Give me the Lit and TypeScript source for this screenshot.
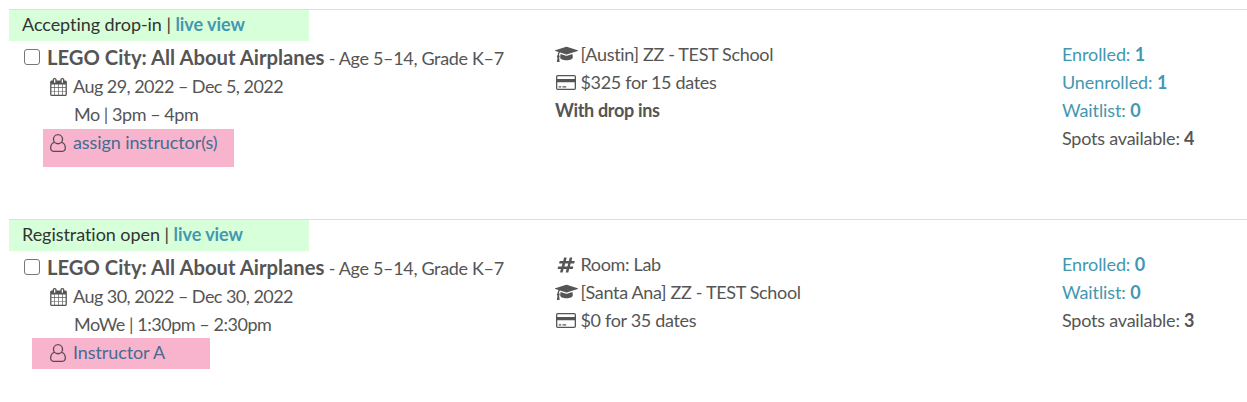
import { LitElement, html, css, svg } from "lit";
import { customElement, property } from "lit/decorators.js";
import { classMap } from "lit/directives/class-map.js";

const icons: Record<string, { box: string; w: number; path: string }> = {
  calendar: {
    box: "64 0 1664 1792", w: 17,
    path: "M192 1664h288v-288h-288v288zm352 0h320v-288h-320v288zm-352-352h288v-320h-288v320zm352 0h320v-320h-320v320zm-352-384h288v-288h-288v288zm736 736h320v-288h-320v288zm-384-736h320v-288h-320v288zm768 736h288v-288h-288v288zm-384-352h320v-320h-320v320zm-352-864v-288q0-13-9.5-22.5t-22.5-9.5h-64q-13 0-22.5 9.5t-9.5 22.5v288q0 13 9.5 22.5t22.5 9.5h64q13 0 22.5-9.5t9.5-22.5zm736 864h288v-320h-288v320zm-384-384h320v-288h-320v288zm384 0h288v-288h-288v288zm32-480v-288q0-13-9.5-22.5t-22.5-9.5h-64q-13 0-22.5 9.5t-9.5 22.5v288q0 13 9.5 22.5t22.5 9.5h64q13 0 22.5-9.5t9.5-22.5zm384-64v1280q0 52-38 90t-90 38h-1408q-52 0-90-38t-38-90v-1280q0-52 38-90t90-38h128v-96q0-66 47-113t113-47h64q66 0 113 47t47 113v96h384v-96q0-66 47-113t113-47h64q66 0 113 47t47 113v96h128q52 0 90 38t38 90z",
  },
  user: {
    box: "0 0 16 18", w: 16,
    path: "M8 0a5.1 5.1 0 0 1 4.3 7.9C14.6 8.7 16 11 16 14.1 16 16.4 14.6 18 12.6 18H3.400C1.400 18 0 16.400 0 14.100 0 11 1.400 8.700 3.700 7.900A5.100 5.100 0 0 1 8 0ZM8 1.300A3.850 3.850 0 1 0 8 9 3.850 3.850 0 0 0 8 1.300ZM4.500 9C2.400 9.200 1.300 11.300 1.300 14.100 1.300 15.700 2.200 16.700 3.400 16.700H12.600C13.800 16.700 14.700 15.700 14.700 14.100 14.700 11.300 13.600 9.200 11.500 9A5.100 5.100 0 0 1 4.500 9Z",
  },
  school: {
    box: "0 0.5 23 18", w: 23,
    path: "M17.500 8.500 17.800 12.100C17.900 13.500 15 14.800 11.500 14.800S5.100 13.500 5.200 12.100L5.500 8.500 11 10.200Q11.500 10.400 12 10.200ZM23 5.200Q23 5.500 22.700 5.600L11.700 9.100H11.400L5 7Q4.100 7.700 4 9.700 4.700 10.100 4.700 10.900 4.700 11.700 4.100 12.100L4.600 16Q4.600 16.500 4.200 16.500H2.300Q1.900 16.500 1.900 16L2.500 12.100Q1.900 11.700 1.900 10.900 1.900 10.100 2.600 9.700 2.700 7.800 3.600 6.600L.3 5.600Q0 5.500 0 5.200T.3 4.800L11.300 1.300H11.700L22.700 4.800Q23 4.900 23 5.200Z",
  },
  card: {
    box: "0 0.5 20 18", w: 20,
    path: "M1.800 1.500H18.200Q20 1.500 20 3.300V14.800Q20 16.500 18.200 16.500H1.800Q0 16.500 0 14.800V3.300Q0 1.500 1.800 1.500ZM1.700 2.700Q1.300 2.700 1.300 3.200V5.500H18.700V3.200Q18.700 2.700 18.300 2.700ZM18.300 15.300Q18.700 15.300 18.700 14.800V8.800H1.300V14.800Q1.300 15.300 1.700 15.300ZM2.700 14V12.700H5.200V14ZM6.500 14V12.700H10.200V14Z",
  },
  hash: {
    box: "0 0 18 18", w: 18,
    path: "M10.500 10.500 11.200 7.500H8.100L7.400 10.500ZM17.800 5.300 17.200 7.300Q17.100 7.500 16.800 7.500H13.600L12.900 10.500H15.900Q16.400 10.500 16.300 11L15.800 12.800Q15.700 13 15.400 13H12.200L11.400 16.200Q11.300 16.500 11 16.500H9.100Q8.700 16.500 8.800 16.100L9.600 13H6.500L5.700 16.200Q5.600 16.500 5.300 16.500H3.500Q3 16.500 3.100 16.100L3.900 13H.9Q.5 13 .6 12.600L1.100 10.800Q1.200 10.500 1.500 10.500H4.800L5.500 7.500H2.500Q2 7.500 2.100 7.100L2.600 5.300Q2.700 5 3 5H6.200L7 1.800Q7.100 1.500 7.400 1.500H9.300Q9.700 1.500 9.600 1.900L8.800 5H11.900L12.700 1.800Q12.800 1.500 13.100 1.500H14.900Q15.300 1.500 15.200 1.900L14.500 5H17.400Q17.900 5 17.800 5.300Z",
  },
};

const icon = (name: string) => {
  const i = icons[name];
  return html`<svg width=${i.w} height="18" viewBox=${i.box}>${svg`<path fill="currentColor" fill-rule="evenodd" d=${i.path} />`}</svg>`;
};

interface Session {
  status: string;
  dates: string;
  times: string;
  instructor: string;
  assigned: boolean;
  details: { icon?: string; text: string }[];
  counts: { label: string; value: number; link: boolean }[];
}

const sessions: Session[] = [
  {
    status: "Accepting drop-in",
    dates: "Aug 29, 2022 – Dec 5, 2022",
    times: "Mo | 3pm – 4pm",
    instructor: "assign instructor(s)",
    assigned: false,
    details: [
      { icon: "school", text: "[Austin] ZZ - TEST School" },
      { icon: "card", text: "$325 for 15 dates" },
      { text: "With drop ins" },
    ],
    counts: [
      { label: "Enrolled:", value: 1, link: true },
      { label: "Unenrolled:", value: 1, link: true },
      { label: "Waitlist:", value: 0, link: true },
      { label: "Spots available:", value: 4, link: false },
    ],
  },
  {
    status: "Registration open",
    dates: "Aug 30, 2022 – Dec 30, 2022",
    times: "MoWe | 1:30pm – 2:30pm",
    instructor: "Instructor A",
    assigned: true,
    details: [
      { icon: "hash", text: "Room: Lab" },
      { icon: "school", text: "[Santa Ana] ZZ - TEST School" },
      { icon: "card", text: "$0 for 35 dates" },
    ],
    counts: [
      { label: "Enrolled:", value: 0, link: true },
      { label: "Waitlist:", value: 0, link: true },
      { label: "Spots available:", value: 3, link: false },
    ],
  },
];

@customElement("session-row")
export class SessionRow extends LitElement {
  @property({ attribute: false }) session!: Session;

  static styles = css`
    :host { display: block; height: 209px; border-top: 1px solid #ddd; }
    .status { box-sizing: border-box; width: 300px; height: 31px; padding-left: 13px; background: #d7ffd9; color: #333; line-height: 28px; letter-spacing: -0.05px; }
    b { font-weight: 700; }
    .live, .link { color: #4397b0; }
    .columns { display: grid; grid-template-columns: 546px 507px 1fr; line-height: 26px; }
    .title { display: flex; align-items: center; height: 32px; padding-left: 15px; letter-spacing: -0.33px; }
    .check { appearance: none; box-sizing: border-box; width: 16px; height: 16px; margin: 0 7px 1px 0; border: 1px solid #767676; border-radius: 3px; background: #fff; }
    .name { font-size: 20.25px; line-height: 32px; letter-spacing: 0; }
    .line { display: flex; align-items: flex-start; height: 28px; letter-spacing: -0.33px; }
    .line svg { margin-top: 5px; }
    .date { padding-left: 41px; gap: 6px; letter-spacing: -0.54px; }
    .time { padding-left: 65px; letter-spacing: -0.46px; }
    .instructor { box-sizing: border-box; width: 191px; height: 38px; margin-left: 34px; padding-left: 7px; gap: 7px; background: #f8b4cd; color: #5b4a56; letter-spacing: -0.1px; }
    .assigned { width: 178px; height: 31px; margin: -1px 0 0 23px; padding: 1px 0 0 18px; }
    .person { color: #456c91; }
    .glyph { display: flex; justify-content: center; width: 22px; margin-right: 3.500px; }
    .glyph svg { flex: none; }
    .count { height: 28px; letter-spacing: -0.22px; }
    .link { letter-spacing: -0.1px; }
  `;

  render() {
    const s = this.session;
    return html`
      <div class="status">${s.status} | <b class="live">live view</b></div>
      <div class="columns">
        <div>
          <div class="title">
            <input class="check" type="checkbox" />
            <span><b class="name">LEGO City: All About Airplanes</b> - Age 5–14, Grade K–7</span>
          </div>
          <div class="line date">${icon("calendar")}<span>${s.dates}</span></div>
          <div class="line time">${s.times}</div>
          <div class=${classMap({ line: true, instructor: true, assigned: s.assigned })}>
            ${icon("user")}<span class="person">${s.instructor}</span>
          </div>
        </div>
        <div>
          ${s.details.map((d) =>
            d.icon
              ? html`<div class="line"><span class="glyph">${icon(d.icon)}</span><span>${d.text}</span></div>`
              : html`<div class="line"><b>${d.text}</b></div>`
          )}
        </div>
        <div>
          ${s.counts.map((c) => html`<div class=${classMap({ count: true, link: c.link })}>${c.label} <b>${c.value}</b></div>`)}
        </div>
      </div>
    `;
  }
}

@customElement("app-root")
export class AppRoot extends LitElement {
  static styles = css`
    :host {
      display: block;
      box-sizing: border-box;
      height: 402px;
      overflow: hidden;
      padding: 9px 0 0 9px;
      background: #fff;
      color: #555;
      font: 400 18px Lato, sans-serif;
      font-variant-ligatures: none;
    }
  `;

  render() {
    return html`${sessions.map((s) => html`<session-row .session=${s}></session-row>`)}`;
  }
}
